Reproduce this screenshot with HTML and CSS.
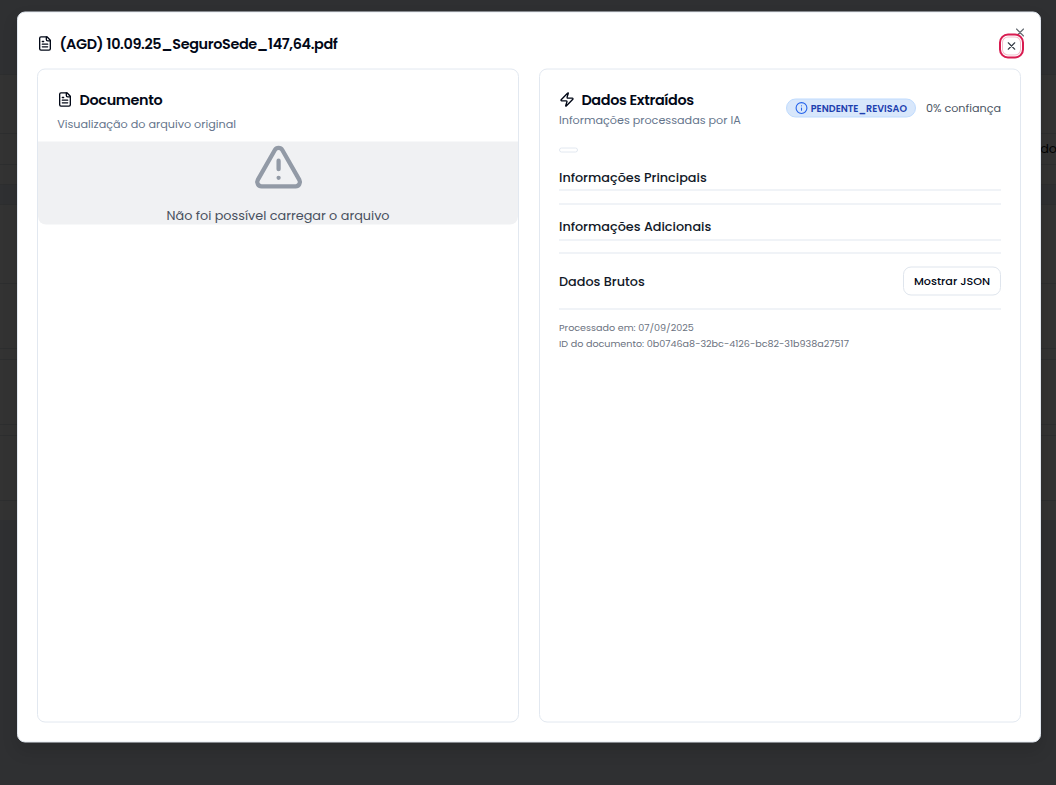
FILE: index.html
```html
<!DOCTYPE html>
<html lang="pt-BR">
<head>
<meta charset="utf-8">
<title>Documento</title>
<link rel="stylesheet" href="styles.css">
</head>
<body>
<div class="backdrop">
  <div class="band band-top"></div>
  <div class="row row-a"></div>
  <div class="row row-b"><span>odo</span></div>
  <div class="row row-c"></div>
  <div class="row row-d"></div>
  <div class="band band-gap"></div>
  <div class="row row-e"></div>
  <div class="row row-f"></div>
  <div class="row row-g"></div>
  <div class="row row-f"></div>
  <div class="row row-g"></div>
  <div class="row row-f"></div>
  <div class="row row-h"></div>
  <div class="band band-end"></div>
</div>
<main class="dialog">
  <header class="dialog-header">
    <svg class="icon" viewBox="0 0 24 24"><path d="M15 2H6a2 2 0 0 0-2 2v16a2 2 0 0 0 2 2h12a2 2 0 0 0 2-2V7Z"/><path d="M14 2v4a2 2 0 0 0 2 2h4M10 9H8M16 13H8M16 17H8"/></svg>
    <h1 class="title">(AGD) 10.09.25_SeguroSede_147,64.pdf</h1>
  </header>
  <svg class="close-back" viewBox="0 0 24 24"><path d="M18 6 6 18M6 6l12 12"/></svg>
  <button class="close"><svg viewBox="0 0 24 24"><path d="M18 6 6 18M6 6l12 12"/></svg></button>
  <div class="columns">
    <section class="card">
      <div class="doc-head">
        <h2 class="card-title"><svg class="icon" viewBox="0 0 24 24"><path d="M15 2H6a2 2 0 0 0-2 2v16a2 2 0 0 0 2 2h12a2 2 0 0 0 2-2V7Z"/><path d="M14 2v4a2 2 0 0 0 2 2h4M10 9H8M16 13H8M16 17H8"/></svg><span>Documento</span></h2>
        <p class="sub">Visualização do arquivo original</p>
      </div>
      <div class="preview">
        <svg class="alert" viewBox="0 0 24 24"><path d="m21.730 18-8-14a2 2 0 0 0-3.480 0l-8 14A2 2 0 0 0 4 21h16a2 2 0 0 0 1.730-3Z"/><path d="M12 9v4M12 17h.01"/></svg>
        <p>Não foi possível carregar o arquivo</p>
      </div>
    </section>
    <section class="card data">
      <div class="data-head">
        <div>
          <h2 class="card-title"><svg class="icon" viewBox="0 0 24 24"><path d="M4 14a1 1 0 0 1-.78-1.630l9.900-10.200a.5.5 0 0 1 .86.460l-1.920 6.020A1 1 0 0 0 13 10h7a1 1 0 0 1 .78 1.630l-9.900 10.200a.5.5 0 0 1-.86-.460l1.920-6.020A1 1 0 0 0 11 14z"/></svg><span>Dados Extraídos</span></h2>
          <p class="sub">Informações processadas por IA</p>
        </div>
        <div class="status">
          <span class="badge"><svg viewBox="0 0 24 24"><circle cx="12" cy="12" r="10"/><path d="M12 16v-4M12 8h.01"/></svg><span>PENDENTE_REVISAO</span></span>
          <span>0% confiança</span>
        </div>
      </div>
      <span class="chip"></span>
      <h3 class="section-title first">Informações Principais</h3>
      <h3 class="section-title second">Informações Adicionais</h3>
      <div class="raw">
        <h3>Dados Brutos</h3>
        <button class="json">Mostrar JSON</button>
      </div>
      <footer class="meta">
        <p>Processado em: 07/09/2025</p>
        <p>ID do documento: 0b0746a8-32bc-4126-bc82-31b938a27517</p>
      </footer>
    </section>
  </div>
</main>
</body>
</html>
```
FILE: styles.css
```css
* { box-sizing: border-box; }
body { margin: 0; width: 1056px; height: 785px; overflow: hidden; position: relative; background: #2f3032; font-family: Poppins, Inter, sans-serif; color: #020817; }
h1, h2, h3, p { margin: 0; font-weight: 500; }
p, span { white-space: nowrap; }
svg { display: block; fill: none; stroke: currentColor; stroke-width: 2; stroke-linecap: round; stroke-linejoin: round; flex: none; }

.backdrop { display: flex; flex-direction: column; height: 785px; }
.band { background: #2f3032; flex: none; }
.row { background: #333; border-top: 1px solid #2d2e2f; flex: none; }
.band-top { height: 74px; }
.row-a { height: 59px; }
.row-b { height: 31px; text-align: right; font-size: 12.8px; line-height: 30px; color: #030303; }
.row-b span { margin-right: -1px; }
.row-c { height: 20px; }
.row-d { height: 1px; }
.band-gap { height: 19px; }
.row-e { height: 79px; }
.row-f { height: 65px; }
.row-g { height: 11px; }
.row-h { height: 20px; }
.band-end { flex: 1; }

.dialog { position: absolute; left: 17px; top: 12px; transform: translateY(-0.5px); width: 1024px; height: 731px; padding: 19px; background: #fff; border: 1px solid #e2e8f0; border-radius: 8px; box-shadow: 0 8px 16px rgba(0,0,0,.12); }
.dialog-header { display: flex; align-items: center; gap: 6.4px; height: 24px; margin-bottom: 13px; }
.icon { width: 16px; height: 16px; }
.title { font-size: 14.4px; line-height: 22px; margin-top: -1px; font-weight: 600; letter-spacing: -0.025em; }
.close-back { position: absolute; right: 13px; top: 12.5px; width: 14px; height: 14px; color: #666b72; }
.close { position: absolute; right: 16px; top: 21px; width: 25px; height: 25px; padding: 0; display: grid; place-items: center; border: 2px solid #d81b50; border-radius: 9px; background: #fff; box-shadow: inset 0 0 0 1px #fff, inset 0 0 0 2px #f2bdcb; color: #353b46; }
.close svg { width: 13px; height: 13px; }

.columns { display: grid; grid-template-columns: 482px 482px; gap: 20px; height: 654px; }
.card { border: 1px solid #e2e8f0; border-radius: 8px; }
.card-title { display: flex; align-items: center; gap: 6.4px; height: 20px; font-size: 14.4px; line-height: 20px; font-weight: 600; letter-spacing: -0.025em; }
.sub { font-size: 11.2px; line-height: 16px; color: #64748b; font-weight: 400; }
.doc-head { height: 72px; padding: 20px 19px 0 19.2px; }
.doc-head .sub { margin-top: 6px; }
.preview { height: 83px; background: #f0f1f3; border-radius: 0 0 8px 8px; display: flex; flex-direction: column; align-items: center; color: #48505e; font-size: 12.8px; line-height: 19.2px; }
.preview p { font-weight: 400; }
.alert { width: 51.2px; height: 51.2px; margin: 0 0 12.8px 1.2px; color: #929aa6; }

.data { padding: 20px 19px 0; }
.data-head { display: flex; justify-content: space-between; height: 58px; }
.data-head .sub { margin-top: 2px; }
.status { display: flex; align-items: center; gap: 9.6px; height: 37px; font-size: 11.2px; color: #4b5563; }
.badge { display: flex; align-items: center; gap: 2.5px; width: 130px; height: 19px; padding-left: 8px; border: 1px solid #bfdbfe; border-radius: 10px; background: #d8e7fb; color: #1e40af; font-size: 9.6px; font-weight: 600; }
.badge svg { width: 13px; height: 13px; color: #2563eb; }
.chip { display: block; width: 19px; height: 5px; border: 1px solid #e2e8f0; border-radius: 3px; }
.section-title { font-size: 12.8px; line-height: 20px; color: #111827; border-bottom: 1px solid #e2e8f0; }
.first { margin-top: 15px; height: 23px; }
.second { margin-top: 13px; padding-top: 12px; height: 37px; border-top: 1px solid #e2e8f0; }
.raw { display: flex; justify-content: space-between; align-items: center; margin-top: 12px; height: 57px; border-top: 1px solid #e2e8f0; border-bottom: 1px solid #e2e8f0; }
.raw h3 { font-size: 12.8px; line-height: 20px; color: #111827; }
.json { width: 98px; height: 29px; padding: 0; border: 1px solid #dfe5ed; border-radius: 8px; background: #fff; color: #020817; font: inherit; font-size: 11.2px; font-weight: 500; }
.meta { padding-top: 10px; font-size: 9.6px; line-height: 16px; color: #6b7280; }
.meta p { font-weight: 400; }
```
